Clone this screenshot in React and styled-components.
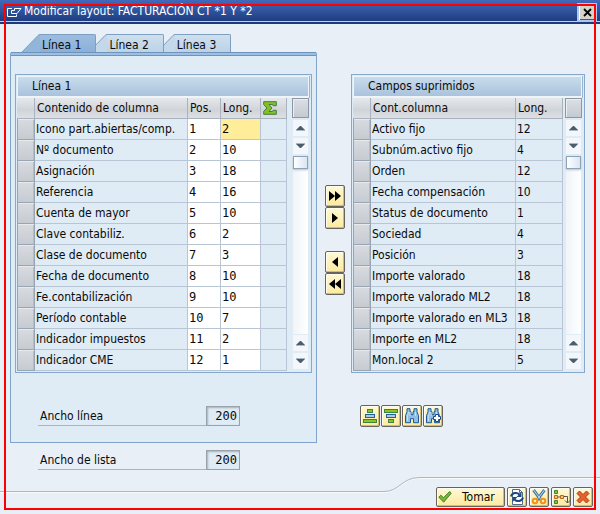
import React from "react";
import styled, { createGlobalStyle } from "styled-components";

const sans = '"DejaVu Sans Condensed", "DejaVu Sans", sans-serif';
const mono = '"DejaVu Sans Mono", monospace';

const GlobalStyle = createGlobalStyle`
  *, *::before, *::after { box-sizing: border-box; }
  body { margin: 0; background: #e8eff6; }
  button, input { font: inherit; color: inherit; margin: 0; padding: 0; border-radius: 0; }
  svg { display: block; flex: none; }
`;

const Dialog = styled.div`
  position: relative;
  display: flex;
  flex-direction: column;
  min-height: 100vh;
  font: 12px/16px ${sans};
  color: #0a0a0a;
  background: #e8eff6;
`;

const Highlight = styled.div`
  position: absolute;
  inset: 4px;
  border: 2px solid #ff0000;
  pointer-events: none;
`;

const TitleBar = styled.header`
  display: flex;
  align-items: center;
  gap: 2px;
  height: 24px;
  padding: 0 3px 0 7px;
  color: #fff;
  background: linear-gradient(#4169bd 0, #3459a5 8px, #1f3d80 21px, #c3d2ea 21px, #c3d2ea 22px, #1d3a7b 22px);
`;

const Title = styled.h1`
  flex: 1;
  margin: 0;
  padding-bottom: 2px;
  font: inherit;
`;

const CloseButton = styled.button`
  display: grid;
  place-items: center;
  width: 20px;
  height: 19px;
  border: 2px solid #a9c9f3;
  background: #d6d2c8;
  box-shadow: inset 1px 1px #fff, inset -1px -1px #555;
`;

const Body = styled.main`
  display: grid;
  grid-template-columns: 307fr 34px 234fr;
  padding: 10px 15px 0 10px;
`;

const TabList = styled.div`
  display: flex;
  padding-left: 12px;
`;

const TabButton = styled.button`
  position: relative;
  z-index: ${(p) => p.$level};
  display: flex;
  height: 18px;
  border: 0;
  background: none;
  & + & { margin-left: -7px; }
`;

const TabLabel = styled.span`
  height: 18px;
  padding: 1px 14px 0 2px;
  line-height: 18px;
  border: solid #7d9fc1;
  border-width: 1px 1px 0 0;
  border-radius: 0 2px 0 0;
  background: ${(p) => (p.$active ? "linear-gradient(#9dbddd, #8bb0d9)" : "linear-gradient(#cfe0ee, #bcd2e7)")};
`;

const TabPanel = styled.section`
  padding: 18px 4px 16px;
  border: 1px solid #7fa3cb;
  border-top: 0;
  border-radius: 2px 2px 0 0;
  background: #dfebf5;
  &::before {
    content: "";
    display: block;
    height: 4px;
    margin: -18px -4px 18px;
    border: solid #6d93bf;
    border-width: 1px 0;
    background: #9dbfe2;
  }
`;

const Panel = styled.section`
  padding: 1px;
  border: 1px solid #86a8cc;
  background: #dfebf5;
`;

const PanelTitle = styled.h2`
  height: 22px;
  margin: 0 1px 0 0;
  padding-left: 14px;
  font: inherit;
  line-height: 19px;
  border: solid #edf4fa;
  border-width: 1px 1px 2px 1px;
  background: linear-gradient(#c8dceb, #aac2dc);
  box-shadow: 1px 0 #9ab5d1;
`;

const PanelBody = styled.div`
  display: flex;
  gap: ${(p) => p.$gap}px;
`;

const Table = styled.table`
  flex: 1;
  min-width: 0;
  table-layout: fixed;
  border-collapse: separate;
  border-spacing: 0;
`;

const Col = styled.col`
  width: ${(p) => (p.$width ? `${p.$width}px` : "auto")};
`;

const HeadCell = styled.th`
  height: 21px;
  padding: 0 0 0 2px;
  font-weight: normal;
  text-align: left;
  white-space: nowrap;
  border: solid #a9b2bd;
  border-width: 0 1px 1px 0;
  background: linear-gradient(#e5e8eb, #d0d4d9 60%, #dde0e3);
`;

const Cell = styled.td`
  height: 21px;
  padding: 0 0 0 1px;
  white-space: nowrap;
  border: solid #b7c5d4;
  border-width: 0 1px 1px 0;
  background: ${(p) => (p.$editable ? (p.$current ? "#ffed99" : "#fff") : "transparent")};
`;

const SelectCell = styled.td`
  height: 21px;
  padding: 0;
`;

const RowSelector = styled.button`
  display: block;
  width: 100%;
  height: 21px;
  border: 1px solid #9aa5b3;
  border-top: 0;
  background: linear-gradient(#d8dbe0, #c6cbd2);
  box-shadow: inset 0 1px #e7e9ed, inset -1px 0 #b4bcc7;
`;

const CellInput = styled.input`
  display: block;
  width: 100%;
  height: 20px;
  border: 0;
  outline: 0;
  background: transparent;
  font-family: ${mono};
`;

const ScrollColumn = styled.div`
  display: flex;
  flex-direction: column;
  width: 17px;
  margin-right: 1px;
`;

const ConfigButton = styled.button`
  height: 20px;
  margin-bottom: 2px;
  border: 1px solid #8d96a4;
  background: linear-gradient(#dcdfe4, #c5cad2);
  box-shadow: inset 1px 1px #eceef1;
`;

const ArrowButton = styled.button`
  display: grid;
  place-items: center;
  height: 16px;
  margin: 0 1px 2px 1px;
  border: 0;
  background: #f3f7fb;
`;

const Track = styled.div`
  flex: 1;
  margin: 0 1px 1px 1px;
  background: linear-gradient(90deg, #f0f4f8, #fff);
`;

const Thumb = styled.div`
  height: 13px;
  border: 1px solid #8da2b8;
  background: linear-gradient(90deg, #fff, #d9e6f1);
  box-shadow: 0 1px 2px #b5bec8;
`;

const Transfer = styled.div`
  display: flex;
  flex-direction: column;
  align-items: flex-start;
  gap: 22px;
  padding: 151px 0 0 8px;
`;

const ButtonStack = styled.div`
  display: flex;
  flex-direction: column;
`;

const ToolButton = styled.button`
  display: flex;
  align-items: center;
  justify-content: ${(p) => (p.$wide ? "flex-start" : "center")};
  gap: 10px;
  width: ${(p) => (p.$wide ? 69 : 20)}px;
  height: ${(p) => (p.$low ? 20 : 22)}px;
  padding: 0 1px;
  line-height: 18px;
  border: 1px solid #66645d;
  border-radius: 2px;
  background: linear-gradient(#fff8d4, #fdeaa0);
  box-shadow: inset -1px -1px #cfbd79, inset 1px 1px #fffdf0;
`;

const RightSide = styled.div`
  padding-top: 40px;
`;

const Toolbar = styled.div`
  display: flex;
  gap: 1px;
  padding: 32px 0 0 9px;
`;

const Field = styled.div`
  display: flex;
  width: 202px;
  height: 20px;
  margin: ${(p) => p.$top}px 0 0 ${(p) => p.$left}px;
`;

const FieldLabel = styled.label`
  flex: 1;
  padding-left: 2px;
  line-height: 20px;
  border-bottom: 1px solid #abb3bb;
`;

const FieldInput = styled.input`
  width: 34px;
  height: 20px;
  padding-right: 2px;
  border: 1px solid #9aa1a8;
  outline: 0;
  text-align: right;
  font-family: ${mono};
  background: #dfebf5;
  box-shadow: inset 1px 1px 2px #a7b1bb;
`;

const Footer = styled.footer`
  margin-top: auto;
  padding-bottom: 7px;
`;

const Divider = styled.div`
  display: flex;
  height: 16px;
`;

const Rule = styled.div`
  flex: ${(p) => p.$grow};
  align-self: ${(p) => (p.$low ? "flex-end" : "flex-start")};
  height: 2px;
  border-top: 1px solid #a9b8c8;
  border-bottom: 1px solid #f8fafc;
`;

const Actions = styled.div`
  display: flex;
  justify-content: flex-end;
  gap: 2px;
  margin-top: -6px;
  padding-right: 7px;
`;

/* ---- icons ---- */

const WindowIcon = () => (
  <svg width="15" height="11" viewBox="0 0 15 11" fill="none" stroke="#fff">
    <path d="M5 1.500H.5v8h9V7.500M4.500 6.500V3.500h3V1.500h6.500L10 6.500Z" />
  </svg>
);

const CloseIcon = () => (
  <svg width="9" height="9" viewBox="0 0 9 9" stroke="#000" strokeWidth="1.8">
    <path d="M1 1l7 7M8 1L1 8" />
  </svg>
);

const SigmaIcon = () => (
  <svg width="14" height="14" viewBox="0 0 14 14">
    <path d="M.7.7h12.600v4H10L9.500 3.500H6L9 7l-3 3.500h3.500L10 9.300h3.300v4H.7v-3L4 7 .7 3.700Z" fill="#86bf22" stroke="#3f7f45" />
  </svg>
);

const ScrollArrow = ({ down }) => (
  <svg width="9" height="6" viewBox="0 0 9 6" fill="#4a5d6d">
    <path d={down ? "M0 1h9L5 5H4Z" : "M0 5h9L5 1H4Z"} />
    <path d={down ? "M0 .5h9" : "M0 5.500h9"} stroke="#a9b7c2" />
  </svg>
);

const MoveIcon = ({ back, twice }) => {
  const shape = back ? "M6 0v10L0 5Z" : "M0 0v10L6 5Z";
  return (
    <svg width={twice ? 12 : 6} height="10" viewBox={twice ? "0 0 12 10" : "0 0 6 10"}>
      <path d={shape} />
      {twice && <path d={shape} transform="translate(6 0)" />}
    </svg>
  );
};

const SortIcon = ({ descending }) => {
  const widths = descending ? [13, 9, 5] : [5, 9, 13];
  return (
    <svg width="14" height="14" viewBox="0 0 14 14">
      {widths.map((w, i) => (
        <rect
          key={w}
          x={(14 - w) / 2}
          y={0.5 + i * 5}
          width={w}
          height="3"
          fill={i === 1 ? "#a8cce8" : "#8bc51f"}
          stroke={i === 1 ? "#1f639c" : "#3f8244"}
        />
      ))}
    </svg>
  );
};

const BinocularsIcon = ({ more }) => (
  <svg width="16" height="16" viewBox="0 0 16 16">
    <path
      d="M3 .7h3v3h1v3h2v-3h1v-3h3v3l1.500 4v7h-5v-4h-3v4h-5v-7L3 3.700Z"
      fill="#91bee2"
      stroke="#1d5a93"
    />
    <path d="M4.500 4l-1 4v5M11.500 4v4M6 4v4" stroke="#c7dff2" fill="none" />
    {more && <path d="M10.500 6.500h3v2h2v3h-2v2h-3v-2h-2v-3h2Z" fill="#fff" stroke="#1d4682" />}
  </svg>
);

const CheckIcon = () => (
  <svg width="14" height="14" viewBox="0 0 14 14">
    <path d="M.8 7.200l2-2 2.700 2.600L11.700 1.500l1.500 1.700-7.500 9Z" fill="#76b92a" stroke="#477e3b" />
  </svg>
);

const RefreshIcon = () => (
  <svg width="16" height="16" viewBox="0 0 16 16" fill="none">
    <path d="M3.500.5h7l3 3v12h-10Z" fill="#fff" stroke="#526b86" />
    <path d="M10.500.5v3h3" stroke="#526b86" />
    <path d="M2 7.500c1-4 6-4.500 8.500-2M14 8.500c-1 4-6 4.500-8.500 2" stroke="#1d4985" strokeWidth="2" />
    <path d="M12.500 3v5h-5ZM3.500 13V8h5Z" fill="#1d4985" />
  </svg>
);

const ScissorsIcon = () => (
  <svg width="16" height="16" viewBox="0 0 16 16" fill="none">
    <path d="M2.500 1l7.500 10M13.500 1L6 11" stroke="#4779a6" strokeWidth="3" />
    <path d="M2.500 1l7 9M13.500 1L6.500 10" stroke="#b9dcf2" />
    <circle cx="4" cy="12" r="2.300" stroke="#ef941b" strokeWidth="2" />
    <circle cx="12" cy="12" r="2.300" stroke="#ef941b" strokeWidth="2" />
  </svg>
);

const HierarchyIcon = () => (
  <svg width="17" height="16" viewBox="0 0 17 16" fill="none">
    <path d="M1.500 1.500h3v3h-3ZM1.500 11.500h3v3h-3Z" fill="#8bc51f" stroke="#3f8244" />
    <path d="M1.500 6.500h3v3h-3ZM7.500 6.500h3v3h-3Z" fill="#ffc36b" stroke="#bb6617" />
    <path d="M5 8h2M11 7.500h3.500V14M12 11.500l2.500 2.500 2.500-2.500" stroke="#4c5359" />
  </svg>
);

const CancelIcon = () => (
  <svg width="14" height="14" viewBox="0 0 14 14">
    <path
      d="M3.500 1L7 4.500 10.500 1 13 3.500 9.500 7 13 10.500 10.500 13 7 9.500 3.500 13 1 10.500 4.500 7 1 3.500Z"
      fill="#e8602c"
      stroke="#a93a20"
    />
  </svg>
);

/* ---- parts ---- */

const Tab = ({ label, active, level }) => (
  <TabButton type="button" role="tab" aria-selected={active} $level={level}>
    <svg width="18" height="18" viewBox="0 0 18 18">
      <path d="M0 18L16 1.500Q17 .5 18 .5V18Z" fill={active ? "#92b5da" : "#c5d8e9"} />
      <path d="M0 18L16 1.500Q17 .5 18 .5" fill="none" stroke="#7d9fc1" />
    </svg>
    <TabLabel $active={active}>{label}</TabLabel>
  </TabButton>
);

const Scrollbar = () => (
  <ScrollColumn>
    <ConfigButton type="button" aria-label="Configuración" />
    <ArrowButton type="button" aria-label="Subir"><ScrollArrow /></ArrowButton>
    <ArrowButton type="button" aria-label="Bajar"><ScrollArrow down /></ArrowButton>
    <Track><Thumb /></Track>
    <ArrowButton type="button" aria-label="Subir"><ScrollArrow /></ArrowButton>
    <ArrowButton type="button" aria-label="Bajar"><ScrollArrow down /></ArrowButton>
  </ScrollColumn>
);

const columns = [
  ["Icono part.abiertas/comp.", 2],
  ["Nº documento", 10],
  ["Asignación", 18],
  ["Referencia", 16],
  ["Cuenta de mayor", 10],
  ["Clave contabiliz.", 2],
  ["Clase de documento", 3],
  ["Fecha de documento", 10],
  ["Fe.contabilización", 10],
  ["Período contable", 7],
  ["Indicador impuestos", 2],
  ["Indicador CME", 1],
];

const hidden = [
  ["Activo fijo", 12],
  ["Subnúm.activo fijo", 4],
  ["Orden", 12],
  ["Fecha compensación", 10],
  ["Status de documento", 1],
  ["Sociedad", 4],
  ["Posición", 3],
  ["Importe valorado", 18],
  ["Importe valorado ML2", 18],
  ["Importe valorado en ML3", 18],
  ["Importe en ML2", 18],
  ["Mon.local 2", 5],
];

const ColumnsTable = () => (
  <Table>
    <colgroup>
      <Col $width={18} /><Col /><Col $width={33} /><Col $width={40} /><Col $width={26} />
    </colgroup>
    <thead>
      <tr>
        <HeadCell />
        <HeadCell scope="col">Contenido de columna</HeadCell>
        <HeadCell scope="col">Pos.</HeadCell>
        <HeadCell scope="col">Long.</HeadCell>
        <HeadCell scope="col" aria-label="Total"><SigmaIcon /></HeadCell>
      </tr>
    </thead>
    <tbody>
      {columns.map(([name, length], i) => (
        <tr key={name}>
          <SelectCell><RowSelector type="button" aria-label={`Seleccionar ${name}`} /></SelectCell>
          <Cell>{name}</Cell>
          <Cell $editable><CellInput aria-label={`Pos. ${name}`} defaultValue={i + 1} /></Cell>
          <Cell $editable $current={i === 0}>
            <CellInput aria-label={`Long. ${name}`} defaultValue={length} />
          </Cell>
          <Cell />
        </tr>
      ))}
    </tbody>
  </Table>
);

const HiddenTable = () => (
  <Table>
    <colgroup>
      <Col $width={18} /><Col /><Col $width={47} />
    </colgroup>
    <thead>
      <tr>
        <HeadCell />
        <HeadCell scope="col">Cont.columna</HeadCell>
        <HeadCell scope="col">Long.</HeadCell>
      </tr>
    </thead>
    <tbody>
      {hidden.map(([name, length]) => (
        <tr key={name}>
          <SelectCell><RowSelector type="button" aria-label={`Seleccionar ${name}`} /></SelectCell>
          <Cell>{name}</Cell>
          <Cell>{length}</Cell>
        </tr>
      ))}
    </tbody>
  </Table>
);

export default function App() {
  return (
    <Dialog>
      <GlobalStyle />
      <TitleBar>
        <WindowIcon />
        <Title>Modificar layout: FACTURACIÓN CT *1 Y *2</Title>
        <CloseButton type="button" aria-label="Cerrar"><CloseIcon /></CloseButton>
      </TitleBar>
      <Body>
        <div>
          <TabList role="tablist">
            <Tab label="Línea 1" active level={3} />
            <Tab label="Línea 2" active={false} level={2} />
            <Tab label="Línea 3" active={false} level={1} />
          </TabList>
          <TabPanel role="tabpanel">
            <Panel>
              <PanelTitle>Línea 1</PanelTitle>
              <PanelBody $gap={5}>
                <ColumnsTable />
                <Scrollbar />
              </PanelBody>
            </Panel>
            <Field $top={33} $left={23}>
              <FieldLabel htmlFor="line-width">Ancho línea</FieldLabel>
              <FieldInput id="line-width" value="200" readOnly />
            </Field>
          </TabPanel>
          <Field $top={7} $left={28}>
            <FieldLabel htmlFor="list-width">Ancho de lista</FieldLabel>
            <FieldInput id="list-width" value="200" readOnly />
          </Field>
        </div>
        <Transfer>
          <ButtonStack>
            <ToolButton type="button" aria-label="Suprimir todos"><MoveIcon twice /></ToolButton>
            <ToolButton type="button" aria-label="Suprimir"><MoveIcon /></ToolButton>
          </ButtonStack>
          <ButtonStack>
            <ToolButton type="button" aria-label="Añadir"><MoveIcon back /></ToolButton>
            <ToolButton type="button" aria-label="Añadir todos"><MoveIcon back twice /></ToolButton>
          </ButtonStack>
        </Transfer>
        <RightSide>
          <Panel>
            <PanelTitle>Campos suprimidos</PanelTitle>
            <PanelBody $gap={2}>
              <HiddenTable />
              <Scrollbar />
            </PanelBody>
          </Panel>
          <Toolbar>
            <ToolButton type="button" aria-label="Orden ascendente"><SortIcon /></ToolButton>
            <ToolButton type="button" aria-label="Orden descendente"><SortIcon descending /></ToolButton>
            <ToolButton type="button" aria-label="Buscar"><BinocularsIcon /></ToolButton>
            <ToolButton type="button" aria-label="Seguir buscando"><BinocularsIcon more /></ToolButton>
          </Toolbar>
        </RightSide>
      </Body>
      <Footer>
        <Divider>
          <Rule $grow={384} $low />
          <svg width="36" height="16" viewBox="0 0 36 16" fill="none">
            <path d="M0 15.500C16 15.500 17 1.500 36 1.500" stroke="#f8fafc" />
            <path d="M0 14.500C16 14.500 17 .5 36 .5" stroke="#a9b8c8" />
          </svg>
          <Rule $grow={180} />
        </Divider>
        <Actions>
          <ToolButton type="button" $wide $low><CheckIcon />Tomar</ToolButton>
          <ToolButton type="button" $low aria-label="Actualizar"><RefreshIcon /></ToolButton>
          <ToolButton type="button" $low aria-label="Cortar"><ScissorsIcon /></ToolButton>
          <ToolButton type="button" $low aria-label="Jerarquía"><HierarchyIcon /></ToolButton>
          <ToolButton type="button" $low aria-label="Cancelar"><CancelIcon /></ToolButton>
        </Actions>
      </Footer>
      <Highlight />
    </Dialog>
  );
}
